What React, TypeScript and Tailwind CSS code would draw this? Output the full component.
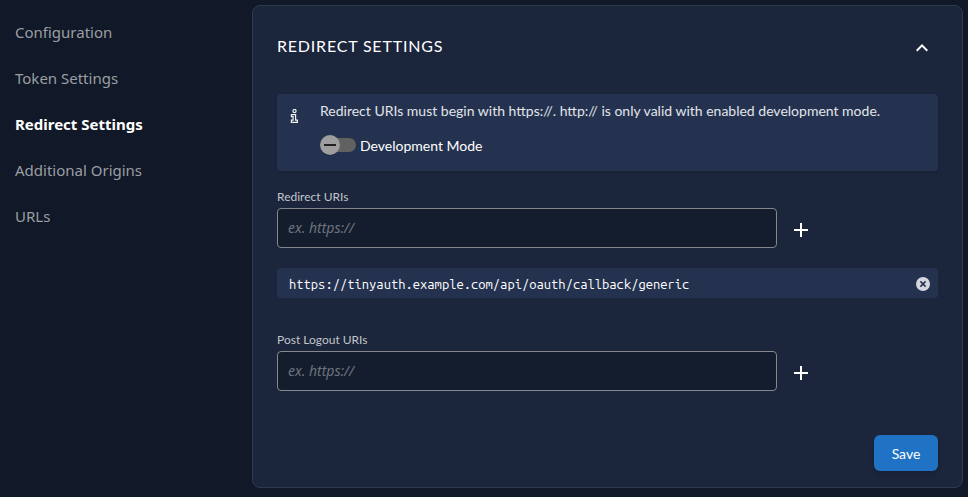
import React, { useState } from "react";

const sections = [
  "Configuration",
  "Token Settings",
  "Redirect Settings",
  "Additional Origins",
  "URLs",
];

function PlusIcon() {
  return (
    <svg viewBox="0 0 24 24" className="h-6 w-6" fill="#ffffff" aria-hidden="true">
      <path d="M19 13h-6v6h-2v-6H5v-2h6V5h2v6h6v2z" />
    </svg>
  );
}

function UriField({ id, label }: { id: string; label: string }) {
  return (
    <div>
      <label htmlFor={id} className="block text-xs leading-4 text-[#c1c5cc]">
        {label}
      </label>
      <div className="mt-[3px] flex items-center gap-3">
        <input
          id={id}
          type="text"
          placeholder="ex. https://"
          className="h-10 w-[500px] min-w-0 rounded-sm border border-[#84878b] bg-[#141d2d] px-[10px] pb-[2px] font-['Noto_Sans',sans-serif] text-sm text-white outline-none placeholder:text-[#6d737e] placeholder:italic focus:border-[#2073c4]"
        />
        <button type="button" aria-label={`Add to ${label}`} className="mt-1 shrink-0 cursor-pointer">
          <PlusIcon />
        </button>
      </div>
    </div>
  );
}

export default function App() {
  const [devMode, setDevMode] = useState(false);
  const [open, setOpen] = useState(true);
  const [uris, setUris] = useState(["https://tinyauth.example.com/api/oauth/callback/generic"]);

  return (
    <div className="flex min-h-screen items-start bg-[#111827] pt-[5px] pr-[5px] font-['Lato',sans-serif] text-white">
      <nav className="w-[252px] shrink-0 pt-1 pl-[15px] font-['Noto_Sans',sans-serif]">
        <ul>
          {sections.map((name) => (
            <li key={name}>
              <a
                href="#"
                aria-current={name === "Redirect Settings" ? "page" : undefined}
                className={
                  name === "Redirect Settings"
                    ? "block text-[15px] leading-[46px] font-bold text-white"
                    : "block text-[15px] leading-[46px] text-[#9b9ea4]"
                }
              >
                {name}
              </a>
            </li>
          ))}
        </ul>
      </nav>

      <main className="min-w-0 flex-1 rounded-lg border border-[#2f3a4d] bg-[#1b253b] px-6 pt-6 pb-4">
        <div className="flex h-8 items-center justify-between">
          <h2 className="text-base tracking-wider uppercase">Redirect Settings</h2>
          <button
            type="button"
            aria-label="Toggle section"
            aria-expanded={open}
            onClick={() => setOpen(!open)}
            className="mt-1 mr-1 cursor-pointer"
          >
            <svg viewBox="0 0 24 24" className="h-6 w-6" fill="#ffffff" aria-hidden="true">
              <path d="M12 8l-6 6 1.41 1.41L12 10.83l4.59 4.58L18 14z" />
            </svg>
          </button>
        </div>

        {open && (
          <div className="mt-8">
            <div className="flex rounded bg-[#243250] pt-[7px] pb-[15px] shadow-sm">
              <div className="flex w-[43px] shrink-0 pt-2 pl-[13px]">
                <svg viewBox="0 0 9 14" className="h-[14px] w-[9px]" fill="none" stroke="#eef0f4" strokeWidth="1.2" aria-hidden="true">
                  <circle cx="4.5" cy="2" r="1.6" />
                  <path d="M1.4 5.6H5.6V11.2H7.4V13.3H1.4V11.2H3.1V7.6H1.4Z" />
                </svg>
              </div>
              <div>
                <p className="text-sm leading-5 text-[#e2e5e9]">
                  Redirect URIs must begin with https://. http:// is only valid with enabled development mode.
                </p>
                <label className="mt-[13px] flex w-fit cursor-pointer items-center gap-1">
                  <input
                    type="checkbox"
                    role="switch"
                    checked={devMode}
                    onChange={() => setDevMode(!devMode)}
                    className="peer sr-only"
                  />
                  <svg viewBox="0 0 36 22" className="h-[22px] w-9" aria-hidden="true">
                    <rect x="1" y="4" width="35" height="14" rx="7" fill={devMode ? "#2073c4" : "#616161"} />
                    <circle cx={devMode ? 26 : 10} cy="11.6" r="10" fill="#000000" opacity="0.25" />
                    <circle cx={devMode ? 26 : 10} cy="11" r="10" fill="#9e9e9e" />
                    <rect x={devMode ? 20 : 4} y="10" width="12" height="2" fill="#212121" />
                  </svg>
                  <span className="pt-[2px] text-sm leading-5">Development Mode</span>
                </label>
              </div>
            </div>

            <div className="mt-[18px]">
              <UriField id="redirect-uris" label="Redirect URIs" />
            </div>

            <ul className="mt-5 flex min-h-[30px] flex-col gap-2">
              {uris.map((uri) => (
                <li key={uri} className="flex h-[30px] items-center justify-between rounded bg-[#243250] pr-2 pl-3">
                  <span className="pt-[2px] font-['Ubuntu_Mono','Noto_Sans_Mono_CJK_SC',monospace] text-[13px] leading-5">{uri}</span>
                  <button
                    type="button"
                    aria-label={`Remove ${uri}`}
                    onClick={() => setUris(uris.filter((item) => item !== uri))}
                    className="mt-[2px] cursor-pointer"
                  >
                    <svg viewBox="0 0 14 14" className="h-[14px] w-[14px]" aria-hidden="true">
                      <circle cx="7" cy="7" r="7" fill="#d3d6dc" />
                      <path d="M4.4 4.4L9.6 9.6M9.6 4.4L4.4 9.6" stroke="#243250" strokeWidth="1.5" />
                    </svg>
                  </button>
                </li>
              ))}
            </ul>

            <div className="mt-[34px]">
              <UriField id="post-logout-uris" label="Post Logout URIs" />
            </div>

            <div className="mt-11 flex justify-end">
              <button type="button" className="h-9 w-16 cursor-pointer rounded-md bg-[#2073c4] pt-[2px] text-sm text-white shadow-md">
                Save
              </button>
            </div>
          </div>
        )}
      </main>
    </div>
  );
}
